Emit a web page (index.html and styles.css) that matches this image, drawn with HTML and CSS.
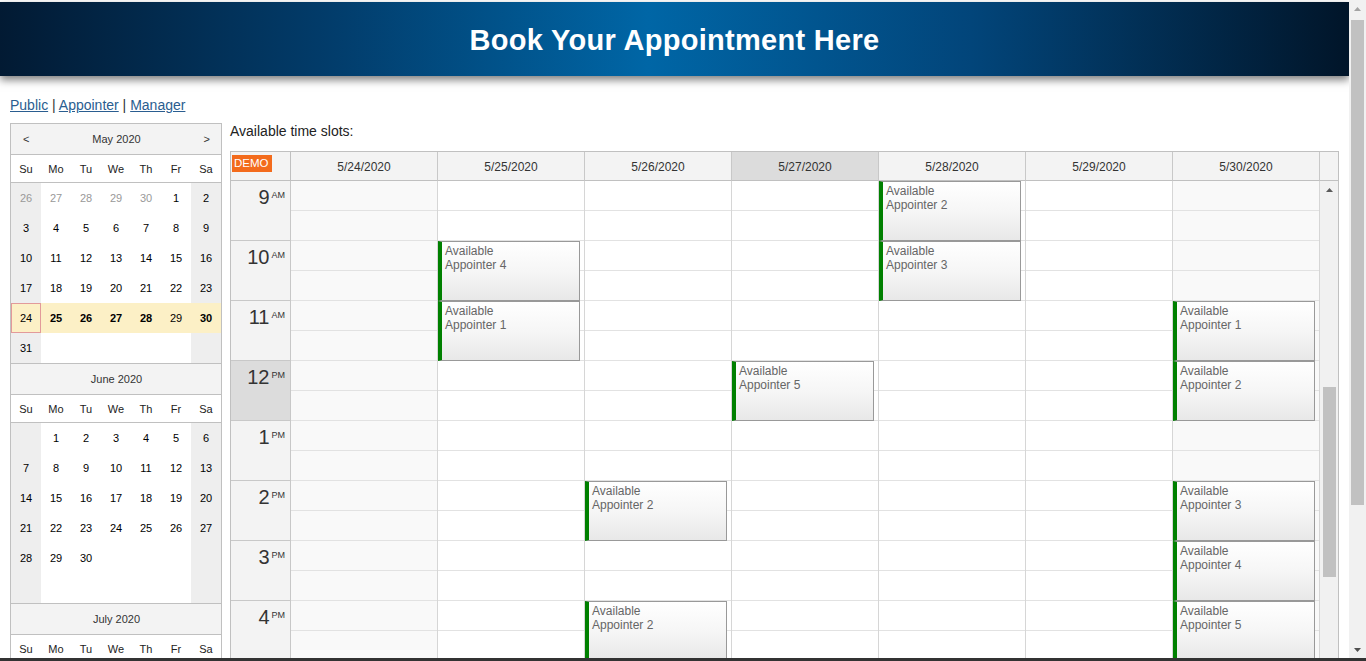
FILE: index.html
```html
<!DOCTYPE html>
<html>
<head>
<meta charset="utf-8">
<title>Book Your Appointment Here</title>
<link rel="stylesheet" href="styles.css">
</head>
<body>
<div class="screen">
  <div class="viewport">
    <div class="page">
      <header class="banner"><h1>Book Your Appointment Here</h1></header>
      <div class="content">
        <nav class="links"><a href="#">Public</a> | <a href="#">Appointer</a> | <a href="#">Manager</a></nav>
        <div class="layout">
          <aside class="navigator">
            <section class="nav-month">
              <div class="nav-title"><span>&lt;</span><span>May 2020</span><span>&gt;</span></div>
              <div class="nav-names"><div>Su</div><div>Mo</div><div>Tu</div><div>We</div><div>Th</div><div>Fr</div><div>Sa</div></div>
              <div class="nav-grid">
                <div class="c we om">26</div><div class="c om">27</div><div class="c om">28</div><div class="c om">29</div><div class="c om">30</div><div class="c">1</div><div class="c we">2</div>
                <div class="c we">3</div><div class="c">4</div><div class="c">5</div><div class="c">6</div><div class="c">7</div><div class="c">8</div><div class="c we">9</div>
                <div class="c we">10</div><div class="c">11</div><div class="c">12</div><div class="c">13</div><div class="c">14</div><div class="c">15</div><div class="c we">16</div>
                <div class="c we">17</div><div class="c">18</div><div class="c">19</div><div class="c">20</div><div class="c">21</div><div class="c">22</div><div class="c we">23</div>
                <div class="c we sel today">24</div><div class="c sel b">25</div><div class="c sel b">26</div><div class="c sel b">27</div><div class="c sel b">28</div><div class="c sel">29</div><div class="c we sel b">30</div>
                <div class="c we">31</div><div class="c"></div><div class="c"></div><div class="c"></div><div class="c"></div><div class="c"></div><div class="c we"></div>
              </div>
            </section>
            <section class="nav-month">
              <div class="nav-title center"><span>June 2020</span></div>
              <div class="nav-names"><div>Su</div><div>Mo</div><div>Tu</div><div>We</div><div>Th</div><div>Fr</div><div>Sa</div></div>
              <div class="nav-grid">
                <div class="c we"></div><div class="c">1</div><div class="c">2</div><div class="c">3</div><div class="c">4</div><div class="c">5</div><div class="c we">6</div>
                <div class="c we">7</div><div class="c">8</div><div class="c">9</div><div class="c">10</div><div class="c">11</div><div class="c">12</div><div class="c we">13</div>
                <div class="c we">14</div><div class="c">15</div><div class="c">16</div><div class="c">17</div><div class="c">18</div><div class="c">19</div><div class="c we">20</div>
                <div class="c we">21</div><div class="c">22</div><div class="c">23</div><div class="c">24</div><div class="c">25</div><div class="c">26</div><div class="c we">27</div>
                <div class="c we">28</div><div class="c">29</div><div class="c">30</div><div class="c"></div><div class="c"></div><div class="c"></div><div class="c we"></div>
                <div class="c we"></div><div class="c"></div><div class="c"></div><div class="c"></div><div class="c"></div><div class="c"></div><div class="c we"></div>
              </div>
            </section>
            <section class="nav-month">
              <div class="nav-title center"><span>July 2020</span></div>
              <div class="nav-names"><div>Su</div><div>Mo</div><div>Tu</div><div>We</div><div>Th</div><div>Fr</div><div>Sa</div></div>
              <div class="nav-grid">
                <div class="c we"></div><div class="c"></div><div class="c"></div><div class="c">1</div><div class="c">2</div><div class="c">3</div><div class="c we">4</div>
              </div>
            </section>
          </aside>

          <main class="cal-area">
            <p class="caption">Available time slots:</p>
            <div class="calendar">
              <div class="cal-head">
                <div class="corner"><span class="demo">DEMO</span></div>
                <div class="day-h">5/24/2020</div>
                <div class="day-h">5/25/2020</div>
                <div class="day-h">5/26/2020</div>
                <div class="day-h today-h">5/27/2020</div>
                <div class="day-h">5/28/2020</div>
                <div class="day-h">5/29/2020</div>
                <div class="day-h">5/30/2020</div>
                <div class="head-stub"></div>
              </div>
              <div class="cal-main">
                <div class="cal-body">
                  <div class="hour r1"><span class="num">9</span><span class="ampm">AM</span></div>
                  <div class="hour r3"><span class="num">10</span><span class="ampm">AM</span></div>
                  <div class="hour r5"><span class="num">11</span><span class="ampm">AM</span></div>
                  <div class="hour r7 cur"><span class="num">12</span><span class="ampm">PM</span></div>
                  <div class="hour r9"><span class="num">1</span><span class="ampm">PM</span></div>
                  <div class="hour r11"><span class="num">2</span><span class="ampm">PM</span></div>
                  <div class="hour r13"><span class="num">3</span><span class="ampm">PM</span></div>
                  <div class="hour r15"><span class="num">4</span><span class="ampm">PM</span></div>
                  <div class="hour r17"><span class="num">5</span><span class="ampm">PM</span></div>

                  <div class="col d1 off"></div>
                  <div class="col d2"></div>
                  <div class="col d3"></div>
                  <div class="col d4"></div>
                  <div class="col d5"></div>
                  <div class="col d6"></div>
                  <div class="col d7 off"></div>

                  <div class="ev d2 r3">Available<br>Appointer 4</div>
                  <div class="ev d2 r5">Available<br>Appointer 1</div>
                  <div class="ev d3 r11">Available<br>Appointer 2</div>
                  <div class="ev d3 r15">Available<br>Appointer 2</div>
                  <div class="ev d4 r7">Available<br>Appointer 5</div>
                  <div class="ev d5 r1">Available<br>Appointer 2</div>
                  <div class="ev d5 r3">Available<br>Appointer 3</div>
                  <div class="ev d7 r5">Available<br>Appointer 1</div>
                  <div class="ev d7 r7">Available<br>Appointer 2</div>
                  <div class="ev d7 r11">Available<br>Appointer 3</div>
                  <div class="ev d7 r13">Available<br>Appointer 4</div>
                  <div class="ev d7 r15">Available<br>Appointer 5</div>
                </div>
                <div class="cal-scroll">
                  <div class="sb-btn"><svg width="7" height="4" viewBox="0 0 7 4"><polygon points="0,4 3.5,0 7,4" fill="#5a5a5a"/></svg></div>
                  <div class="cal-thumb"></div>
                </div>
              </div>
            </div>
          </main>
        </div>
      </div>
    </div>
    <div class="page-scroll">
      <div class="sb-btn"><svg width="7" height="4" viewBox="0 0 7 4"><polygon points="0,4 3.5,0 7,4" fill="#a3a3a3"/></svg></div>
      <div class="page-thumb"></div>
      <div class="sb-fill"></div>
      <div class="sb-btn"><svg width="7" height="4" viewBox="0 0 7 4"><polygon points="0,0 7,0 3.5,4" fill="#505050"/></svg></div>
    </div>
  </div>
  <div class="taskbar"></div>
</div>
</body>
</html>
```
FILE: styles.css
```css
* { box-sizing: border-box; }
html, body { margin: 0; padding: 0; }
body {
  font-family: "Liberation Sans", Arial, sans-serif;
  background: #fff;
  color: #333;
}
.screen {
  width: 1366px;
  height: 661px;
  display: flex;
  flex-direction: column;
  overflow: hidden;
}
.viewport {
  height: 658px;
  display: flex;
  flex: none;
}
.page {
  width: 1349px;
  height: 658px;
  overflow: hidden;
  background: #fff;
  flex: none;
}
.taskbar {
  height: 3px;
  background: #333;
  flex: none;
}

/* banner */
.banner {
  margin-top: 2px;
  height: 74px;
  background: linear-gradient(to right, #021a33 0%, #023d6c 25%, #0066a6 48%, #02457a 72%, #011529 100%);
  box-shadow: 0 4px 8px rgba(0, 0, 0, 0.5);
  display: flex;
  align-items: center;
  justify-content: center;
  padding-top: 2px;
}
.banner h1 {
  margin: 0;
  color: #fff;
  font-family: "Liberation Sans", Arial, sans-serif;
  font-weight: bold;
  font-size: 29px;
  letter-spacing: 0.3px;
  line-height: 34px;
}

.content { padding: 21px 10px 0 10px; }
.links {
  font-size: 14px;
  line-height: 17px;
  height: 17px;
  color: #333;
}
.links a { color: #2a5d90; text-decoration: underline; }

.layout {
  display: flex;
  align-items: flex-start;
  gap: 8px;
  margin-top: 9px;
}

/* navigator */
.navigator {
  flex: none;
  width: 212px;
  border: 1px solid #c0c0c0;
  font-size: 11px;
  color: #000;
}
.nav-month + .nav-month { border-top: 1px solid #c0c0c0; }
.nav-title {
  height: 31px;
  border-bottom: 1px solid #c0c0c0;
  background: #f3f3f3;
  color: #333;
  display: flex;
  align-items: center;
  justify-content: space-between;
  padding: 0 11px 0 12px;
}
.nav-title.center { justify-content: center; }
.nav-names {
  display: grid;
  grid-template-columns: repeat(7, 30px);
  height: 28px;
  border-bottom: 1px solid #c0c0c0;
  background: #fff;
}
.nav-names div {
  display: flex;
  align-items: center;
  justify-content: center;
  color: #222;
}
.nav-grid {
  display: grid;
  grid-template-columns: repeat(7, 30px);
  grid-auto-rows: 30px;
}
.c {
  display: flex;
  align-items: center;
  justify-content: center;
  background: #fff;
  color: #000;
}
.c.we { background: #eeeeee; }
.c.om { color: #999; }
.c.sel { background: #fcf0c6; }
.c.today { border: 1px solid #e29a9a; }
.c.b { font-weight: bold; }

/* calendar area */
.cal-area { flex: none; width: 1109px; }
.caption {
  margin: 0 0 11px;
  font-size: 14px;
  line-height: 17px;
  color: #222;
}
.calendar {
  border: 1px solid #c0c0c0;
  width: 1109px;
}
.cal-head {
  display: flex;
  height: 29px;
  background: #f3f3f3;
}
.corner {
  width: 60px;
  flex: none;
  border-right: 1px solid #c0c0c0;
  border-bottom: 1px solid #c0c0c0;
  padding-top: 1px;
}
.demo {
  display: inline-block;
  background: #f36b1c;
  color: #fff;
  font-size: 11.5px;
  line-height: 17px;
  padding: 0 3px 0 2px;
  margin-left: 1px;
}
.day-h {
  width: 147px;
  flex: none;
  border-right: 1px solid #c8c8c8;
  border-bottom: 1px solid #c0c0c0;
  display: flex;
  align-items: center;
  justify-content: center;
  font-size: 12px;
  color: #333;
  padding-top: 1px;
}
.day-h.today-h { background: #dcdcdc; }
.head-stub {
  flex: 1;
  border-bottom: 1px solid #c0c0c0;
}

.cal-main { display: flex; }
.cal-body {
  display: grid;
  grid-template-columns: 60px repeat(7, 147px);
  grid-template-rows: repeat(18, 30px);
  flex: none;
}
.hour {
  grid-column: 1;
  grid-row-end: span 2;
  background: #f3f3f3;
  border-right: 1px solid #c8c8c8;
  border-bottom: 1px solid #c8c8c8;
  display: flex;
  justify-content: flex-end;
  align-items: flex-start;
  padding: 6px 5px 0 0;
  color: #333;
}
.hour.cur { background: #dcdcdc; }
.num { font-size: 20px; line-height: 20px; }
.ampm { font-size: 9px; line-height: 9px; margin: 4px 0 0 2px; }

.r1 { grid-row-start: 1; }
.r3 { grid-row-start: 3; }
.r5 { grid-row-start: 5; }
.r7 { grid-row-start: 7; }
.r9 { grid-row-start: 9; }
.r11 { grid-row-start: 11; }
.r13 { grid-row-start: 13; }
.r15 { grid-row-start: 15; }
.r17 { grid-row-start: 17; }

.col {
  grid-row: 1 / -1;
  background-color: #fff;
  background-image: repeating-linear-gradient(to bottom, transparent 0, transparent 29px, #e2e2e2 29px, #e2e2e2 30px);
  border-right: 1px solid #d6d6d6;
}
.col.off { background-color: #f9f9f9; }
.d1 { grid-column: 2; }
.d2 { grid-column: 3; }
.d3 { grid-column: 4; }
.d4 { grid-column: 5; }
.d5 { grid-column: 6; }
.d6 { grid-column: 7; }
.d7 { grid-column: 8; }

.ev {
  grid-row-end: span 2;
  margin-right: 5px;
  border: 1px solid #999;
  border-left: 4px solid #008000;
  background: linear-gradient(to bottom, #ffffff 0%, #f6f6f6 50%, #e8e8e8 100%);
  color: #666;
  font-size: 12px;
  line-height: 14px;
  padding: 2px 0 0 3px;
  z-index: 1;
}

.cal-scroll {
  width: 18px;
  flex: none;
  background: #f1f1f1;
  display: flex;
  flex-direction: column;
}
.sb-btn {
  height: 17px;
  flex: none;
  display: flex;
  align-items: center;
  justify-content: center;
}
.cal-scroll .sb-btn { padding-left: 1px; }
.cal-thumb {
  margin: 189px 0 0 3px;
  width: 13px;
  height: 190px;
  background: #c1c1c1;
}

.page-scroll {
  width: 17px;
  flex: none;
  background: #f1f1f1;
  display: flex;
  flex-direction: column;
}
.page-thumb {
  margin: 3px 0 0 2px;
  width: 13px;
  height: 485px;
  background: #c1c1c1;
  flex: none;
}
.sb-fill { flex: 1; }
```
